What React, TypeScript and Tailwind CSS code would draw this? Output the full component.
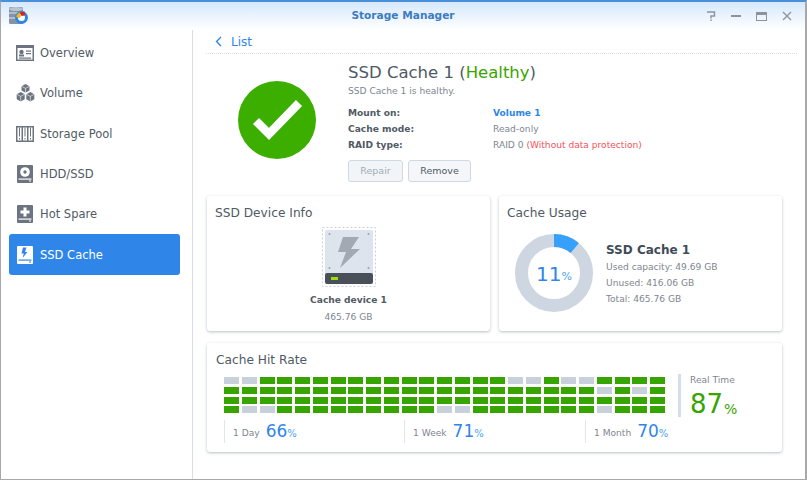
import { ReactNode } from "react";

const font = { fontFamily: '"DejaVu Sans", Verdana, sans-serif' };

const grey = "#c8d0dc";
const green = "#36a500";

// grey cells per row in the hit rate grid
const greyCells = [
  [0, 1, 16, 17, 19, 20],
  [21, 23],
  [],
  [1, 2, 12, 13, 21],
];

const OverviewIcon = ({ color = "#6b7480" }: { color?: string }) => (
  <svg width="18" height="16" viewBox="0 0 18 16" className="shrink-0">
    <rect x="0.750" y="0.750" width="16.500" height="14.500" fill="none" stroke={color} strokeWidth="1.500" />
    <rect x="0" y="0" width="18" height="3" fill={color} />
    <circle cx="5.500" cy="7" r="2.200" fill={color} />
    <rect x="3" y="9.500" width="5" height="2" fill={color} />
    <rect x="10" y="5.500" width="5" height="1.200" fill={color} />
    <rect x="10" y="8" width="5" height="1.200" fill={color} />
    <rect x="3" y="12.500" width="12" height="1.200" fill={color} />
  </svg>
);

const VolumeIcon = () => (
  <svg width="19" height="18" viewBox="0 0 19 18" fill="#6b7480" className="shrink-0">
    <path d="M9.500 0l4 2.200v4.400l-4 2.200-4-2.200V2.200z" />
    <path d="M4.700 8l4 2.200v5l-4 2.300-4-2.300v-5z" />
    <path d="M14.300 8l4 2.200v5l-4 2.300-4-2.300v-5z" />
    <path d="M5.500 2.200l4 2.200 4-2.200M9.500 4.400v4.400M.7 10.200l4 2.200 4-2.200M4.700 12.400v5M10.300 10.200l4 2.200 4-2.200M14.300 12.400v5" fill="none" stroke="#fff" strokeWidth="0.600" />
  </svg>
);

const PoolIcon = () => (
  <svg width="18" height="16" viewBox="0 0 18 16" className="shrink-0">
    <rect width="18" height="16" fill="#6b7480" />
    <rect x="1.500" y="1.500" width="4" height="13" fill="#fff" />
    <rect x="7" y="1.500" width="4" height="13" fill="#fff" />
    <rect x="12.500" y="1.500" width="4" height="13" fill="#fff" />
    <rect x="3" y="1.500" width="1" height="9" fill="#6b7480" />
    <rect x="8.500" y="1.500" width="1" height="9" fill="#6b7480" />
    <rect x="14" y="1.500" width="1" height="9" fill="#6b7480" />
    <rect x="3" y="12" width="1" height="1.500" fill="#6b7480" />
    <rect x="8.500" y="12" width="1" height="1.500" fill="#6b7480" />
    <rect x="14" y="12" width="1" height="1.500" fill="#6b7480" />
  </svg>
);

// shared drive shape: body with a slot along the bottom
const DriveIcon = ({ bg, fg, children }: { bg: string; fg: string; children: ReactNode }) => (
  <svg width="16" height="18" viewBox="0 0 16 18" className="shrink-0">
    <rect width="16" height="18" rx="1" fill={bg} />
    {children}
    <rect x="1.500" y="13.500" width="13" height="1.200" fill={fg} />
    <rect x="12" y="15.500" width="2" height="1" fill={fg} />
  </svg>
);

const HddIcon = () => (
  <DriveIcon bg="#6b7480" fg="#fff">
    <circle cx="8" cy="7" r="4.800" fill="#fff" />
    <circle cx="8" cy="7" r="1.700" fill="#6b7480" />
  </DriveIcon>
);

const SpareIcon = () => (
  <DriveIcon bg="#6b7480" fg="#fff">
    <path d="M6.500 2.500h3v3h3v3h-3v3h-3v-3h-3v-3h3z" fill="#fff" />
  </DriveIcon>
);

const CacheIcon = () => (
  <DriveIcon bg="#fff" fg="#2f86e8">
    <path d="M9.500 1.500H6L4.500 7.500h2.300L5.500 12l5-6H8z" fill="#2f86e8" />
  </DriveIcon>
);

const AppIcon = () => (
  <svg width="20" height="18" viewBox="0 0 20 18" className="-ml-[5px]">
    <rect x="0" y="0" width="14" height="17" rx="1.500" fill="#8593a4" />
    <ellipse cx="7" cy="2" rx="7" ry="2" fill="#b9c4d0" />
    <rect x="0" y="5.500" width="14" height="1" fill="#e3e9f0" />
    <rect x="0" y="10.500" width="14" height="1" fill="#e3e9f0" />
    <circle cx="12.500" cy="10.500" r="5" fill="#fff" stroke="#2f86e8" strokeWidth="3" />
    <path d="M7.200 10a5.300 5.300 0 0 1 3.500-4.500l1.300 3.500-1.500 2z" fill="#f5b90f" />
    <path d="M11 5.500l4.500-1 .5 4-3.500.5z" fill="#e02020" />
  </svg>
);

const navItems = [
  { label: "Overview", icon: <OverviewIcon /> },
  { label: "Volume", icon: <VolumeIcon /> },
  { label: "Storage Pool", icon: <PoolIcon /> },
  { label: "HDD/SSD", icon: <HddIcon /> },
  { label: "Hot Spare", icon: <SpareIcon /> },
  { label: "SSD Cache", icon: <CacheIcon />, active: true },
];

const TitleBar = () => (
  <div className="grid h-[28px] shrink-0 grid-cols-3 items-center bg-gradient-to-b from-[#d6e8fc] to-white px-[13px]">
    <AppIcon />
    <div className="text-center text-[10.600px] font-bold text-[#3b7dbf]">Storage Manager</div>
    <div className="flex items-center justify-end gap-[15px]">
      <svg width="10" height="10" viewBox="0 0 10 10" fill="none" stroke="#8a939e" strokeWidth="1.400">
        <path d="M1 1h7.500v4H5v2.500M5 8.500V10" />
      </svg>
      <span className="h-[2px] w-[10px] bg-[#8a939e]" />
      <span className="h-[9px] w-[11px] border border-t-[3px] border-[#8a939e]" />
      <svg width="10" height="10" viewBox="0 0 10 10" stroke="#8a939e" strokeWidth="1.300">
        <path d="M1 1l8 8M9 1l-8 8" />
      </svg>
    </div>
  </div>
);

const Sidebar = () => (
  <div className="flex w-[192px] shrink-0 flex-col border-r border-[#d8dde3] pl-2 pr-[12px] pt-[3px]">
    {navItems.map((item) => (
      <div
        key={item.label}
        className={`flex h-[40.300px] items-center rounded-[3px] pl-[7px] text-[11.500px] ${
          item.active ? "bg-[#2f86e8] text-white" : "text-[#505a64]"
        }`}
      >
        <span className="flex w-[18px] justify-center">{item.icon}</span>
        <span className="ml-[6px] pt-[1px]">{item.label}</span>
      </div>
    ))}
  </div>
);

const Card = ({ title, className, titleClass = "px-2", children }: { title: string; className: string; titleClass?: string; children: ReactNode }) => (
  <div className={`rounded-[3px] bg-white shadow-[0_1px_3px_rgba(60,70,90,0.35)] ${className}`}>
    <div className={`pt-[9px] text-[12.200px] leading-[17px] text-[#505a64] ${titleClass}`}>{title}</div>
    {children}
  </div>
);

const InfoRow = ({ label, children }: { label: string; children: ReactNode }) => (
  <div className="flex h-[16px] items-center text-[9.100px]">
    <span className="w-[145px] font-bold text-[#505a64]">{label}</span>
    {children}
  </div>
);

const Summary = () => (
  <div className="flex h-[142px] shrink-0">
    <div className="flex w-[142px] justify-center pt-[27px]">
      <svg width="78" height="78" viewBox="0 0 78 78">
        <circle cx="39" cy="39" r="39" fill="#3bae00" />
        <path d="M18 40l13 13 30-31" fill="none" stroke="#fff" strokeWidth="8.500" />
      </svg>
    </div>
    <div className="pt-[8px]">
      <div className="text-[16.500px] leading-[22px] text-[#505a64]">
        SSD Cache 1 (<span className="text-[#3aa500]">Healthy</span>)
      </div>
      <div className="mb-[8px] text-[9.100px] leading-[14px] text-[#7d8690]">SSD Cache 1 is healthy.</div>
      <InfoRow label="Mount on:">
        <span className="font-bold text-[#2f86e8]">Volume 1</span>
      </InfoRow>
      <InfoRow label="Cache mode:">
        <span className="text-[#7d8690]">Read-only</span>
      </InfoRow>
      <InfoRow label="RAID type:">
        <span className="text-[#7d8690]">
          RAID 0 <span className="text-[#f4535a]">(Without data protection)</span>
        </span>
      </InfoRow>
      <div className="mt-[6px] flex gap-[5px] text-[9.500px]">
        <button className="h-[22px] w-[55px] rounded-[3px] border border-[#cfd9e4] bg-[#f2f5f8] text-[#a3acb6]">Repair</button>
        <button className="h-[22px] w-[63px] rounded-[3px] border border-[#cfd9e4] bg-[#f4f6f9] text-[#505a64]">Remove</button>
      </div>
    </div>
  </div>
);

const DeviceCard = () => (
  <Card title="SSD Device Info" className="h-[135px] w-[283px]">
    <div className="flex flex-col items-center pt-[5px]">
      <svg width="54" height="60" viewBox="0 0 54 60">
        <rect x="0.500" y="0.500" width="53" height="59" fill="none" stroke="#c5d0e2" strokeDasharray="2 2" />
        <rect x="3" y="3" width="48" height="54" rx="2" fill="#dee4ee" />
        <circle cx="7.500" cy="7" r="1" fill="#9aa3ad" />
        <circle cx="46.500" cy="7" r="1" fill="#9aa3ad" />
        <circle cx="7.500" cy="41" r="1" fill="#9aa3ad" />
        <circle cx="46.500" cy="41" r="1" fill="#9aa3ad" />
        <path d="M21 10h16l-8 12h9L18 41l6-16h-8z" fill="#a3a9b2" />
        <rect x="3" y="46" width="48" height="11" rx="2" fill="#4a505a" />
        <rect x="9" y="50" width="7" height="3" fill="#9be000" />
      </svg>
      <div className="mt-[6px] text-[9.100px] font-bold leading-[14px] text-[#505a64]">Cache device 1</div>
      <div className="mt-[3px] text-[9.100px] leading-[14px] text-[#7d8690]">465.76 GB</div>
    </div>
  </Card>
);

const UsageCard = () => (
  <Card title="Cache Usage" className="h-[135px] w-[283px]">
    <div className="flex items-center pl-[16px] pt-[12px]">
      <div className="relative h-[78px] w-[78px]">
        <svg width="78" height="78" viewBox="0 0 78 78">
          <circle cx="39" cy="39" r="32.500" fill="none" stroke="#cdd6e1" strokeWidth="13" />
          <circle cx="39" cy="39" r="32.500" fill="none" stroke="#36a0fa" strokeWidth="13" strokeDasharray="22.460 204.200" transform="rotate(-90 39 39)" />
        </svg>
        <div className="absolute inset-0 flex items-center justify-center pt-[1px] text-[#2f86e8]">
          <span className="text-[20px] leading-none">11</span>
          <span className="mt-[5px] text-[11px] leading-none text-[#4ba3f5]">%</span>
        </div>
      </div>
      <div className="pl-[13px] pt-[2px]">
        <div className="text-[12px] font-bold leading-[18px] text-[#414b57]">SSD Cache 1</div>
        <div className="text-[9.100px] leading-[16px] text-[#7d8690]">Used capacity: 49.69 GB</div>
        <div className="text-[9.100px] leading-[16px] text-[#7d8690]">Unused: 416.06 GB</div>
        <div className="text-[9.100px] leading-[16px] text-[#7d8690]">Total: 465.76 GB</div>
      </div>
    </div>
  </Card>
);

const Period = ({ label, value, width }: { label: string; value: number; width: string }) => (
  <div className={`flex h-[23px] items-center whitespace-nowrap border-l border-[#e0e6ee] pl-[8px] ${width}`}>
    <span className="mt-[4px] text-[9.100px] text-[#7d8690]">{label}</span>
    <span className="ml-[6px] text-[17px] leading-none text-[#2f86e8]">{value}</span>
    <span className="mt-[4px] text-[10px] leading-none text-[#4ba3f5]">%</span>
  </div>
);

const HitRateCard = () => (
  <Card title="Cache Hit Rate" titleClass="px-[9px]" className="h-[109px] w-[575px]">
    <div className="flex pl-[17px]">
      <div className="w-[441px]">
        <div className="grid grid-cols-[repeat(25,15px)] gap-x-[2.750px] gap-y-[2.800px] pt-[8px]">
          {greyCells.map((row, r) =>
            Array.from({ length: 25 }, (_, c) => (
              <div
                key={`${r}-${c}`}
                className="h-[7px]"
                style={{ backgroundColor: row.includes(c) ? grey : green }}
              />
            ))
          )}
        </div>
        <div className="mt-[7px] flex">
          <Period label="1 Day" value={66} width="w-[180px]" />
          <Period label="1 Week" value={71} width="w-[181px]" />
          <Period label="1 Month" value={70} width="w-[80px]" />
        </div>
      </div>
      <div className="ml-[13px] mt-[5px] flex h-[43px] flex-col border-l-[3px] border-[#d5deea] pl-[9px]">
        <div className="text-[9.100px] leading-[12px] text-[#7d8690]">Real Time</div>
        <div className="mt-[5px] flex items-end text-[#36a500]">
          <span className="text-[26px] leading-[27px]">87</span>
          <span className="ml-[1px] text-[14px] leading-[18px]">%</span>
        </div>
      </div>
    </div>
  </Card>
);

export default function App() {
  return (
    <div className="h-[480px] w-[807px] overflow-hidden bg-white" style={font}>
      <div className="flex h-[480px] w-[807px] flex-col border-b border-l border-r-2 border-t-2 border-b-[#a8a8a8] border-l-[#a8a8a8] border-r-[#a8a8a8] border-t-[#4a90d9]">
        <TitleBar />
        <div className="flex min-h-0 flex-1">
          <Sidebar />
          <div className="flex flex-1 flex-col pl-[13px] pr-[8px]">
            <div className="flex h-[24px] shrink-0 items-center gap-[9px] border-b border-dotted border-[#d8dde3] pl-[9px] text-[12px] text-[#2f86e8]">
              <svg width="7" height="11" viewBox="0 0 7 11" fill="none" stroke="#2f86e8" strokeWidth="1.400">
                <path d="M6 1L1.500 5.500 6 10" />
              </svg>
              List
            </div>
            <Summary />
            <div className="flex flex-col gap-[12px] pl-[1px]">
              <div className="flex gap-[9px]">
                <DeviceCard />
                <UsageCard />
              </div>
              <HitRateCard />
            </div>
          </div>
        </div>
      </div>
    </div>
  );
}
